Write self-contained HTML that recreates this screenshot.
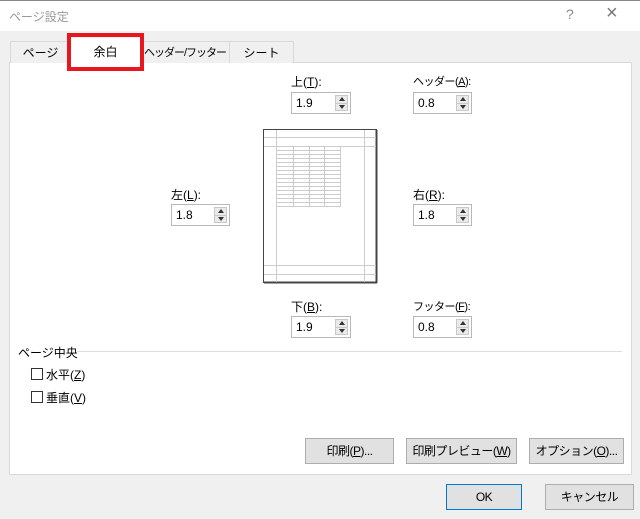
<!DOCTYPE html>
<html><head><meta charset="utf-8"><style>
*{box-sizing:border-box;margin:0;padding:0}
body{width:640px;height:519px;background:#f0f0f0;position:relative;overflow:hidden;font-family:"Liberation Sans","Noto Sans CJK JP",sans-serif;font-size:12px;color:#000}
.a{position:absolute;white-space:nowrap}
.title{left:0;top:0;width:640px;height:31px;background:#fff;border-top:1px solid #888}
.panel{left:9px;top:62px;width:623px;height:413px;background:#fff;border:1px solid #d9d9d9}
.tab{top:41px;height:22px;background:#f0f0f0;border:1px solid #d9d9d9;border-bottom:none;text-align:center;line-height:22px;font-size:12px;overflow:hidden}
.inp{width:60px;height:22px;border:1px solid #b8b8b8;background:#fff;padding-left:4px;line-height:20px;font-size:12px}
.sp{position:absolute;right:2px;top:2px;width:13px;height:16px;border:1px solid #c8c8c8;background:#eaeaea}
.sp:before{content:"";position:absolute;left:3px;top:1px;border:3px solid transparent;border-bottom:4px solid #333;border-top:none}
.sp:after{content:"";position:absolute;left:3px;top:9px;border:3px solid transparent;border-top:4px solid #333;border-bottom:none}
.sp i{position:absolute;left:0;right:0;top:7px;border-top:1px solid #c8c8c8}
.btn{height:26px;background:#e1e1e1;border:1px solid #adadad;text-align:center;line-height:24px;font-size:12px;letter-spacing:-0.5px}
.cb{width:12px;height:12px;border:1px solid #333;background:#fff}
u{text-decoration:underline}
</style></head><body>
<div class="a title"></div>
<div class="a" style="left:9px;top:8px;color:#999;font-size:12px">ページ設定</div>
<div class="a" style="left:566px;top:6px;color:#888;font-size:14px">?</div>
<div class="a" style="left:606px;top:2px;color:#777;font-size:20px;font-weight:100">×</div>
<div class="a panel"></div>
<div class="a tab" style="left:10px;width:61px">ページ</div>
<div class="a tab" style="left:140px;width:90px;font-size:11px;letter-spacing:-1px">ヘッダー/フッター</div>
<div class="a tab" style="left:229px;width:65px">シート</div>
<div class="a" style="left:71px;top:38px;width:69px;height:26px;background:#fff;text-align:center;line-height:28px">余白</div>
<div class="a" style="left:67px;top:33px;width:77px;height:38px;border:4px solid #e8161e"></div>

<div class="a" style="left:291px;top:73px">上(<u>T</u>):</div>
<div class="a inp" style="left:291px;top:92px">1.9<div class="sp"><i></i></div></div>
<div class="a" style="left:413px;top:73px;font-size:11px;letter-spacing:-0.5px">ヘッダー(<u>A</u>):</div>
<div class="a inp" style="left:413px;top:92px;width:59px">0.8<div class="sp"><i></i></div></div>
<div class="a" style="left:171px;top:186px">左(<u>L</u>):</div>
<div class="a inp" style="left:171px;top:204px;width:59px">1.8<div class="sp"><i></i></div></div>
<div class="a" style="left:413px;top:186px">右(<u>R</u>):</div>
<div class="a inp" style="left:413px;top:204px;width:59px">1.8<div class="sp"><i></i></div></div>
<div class="a" style="left:291px;top:298px">下(<u>B</u>):</div>
<div class="a inp" style="left:291px;top:316px">1.9<div class="sp"><i></i></div></div>
<div class="a" style="left:413px;top:298px;font-size:11px;letter-spacing:-0.5px">フッター(<u>F</u>):</div>
<div class="a inp" style="left:413px;top:316px;width:59px">0.8<div class="sp"><i></i></div></div>

<svg class="a" style="left:260px;top:126px" width="120" height="160">
<rect x="3.5" y="3.5" width="113" height="153" fill="#fff" stroke="#444" stroke-width="1"/>
<line x1="116.5" y1="4" x2="116.5" y2="157" stroke="#444" stroke-width="2"/>
<line x1="4" y1="156.5" x2="117" y2="156.5" stroke="#444" stroke-width="2"/>
<g stroke="#ccc" stroke-width="1">
<line x1="16.5" y1="4" x2="16.5" y2="156"/><line x1="104.5" y1="4" x2="104.5" y2="156"/>
<line x1="4" y1="11.5" x2="116" y2="11.5"/><line x1="4" y1="20.5" x2="116" y2="20.5"/>
<line x1="4" y1="139.5" x2="116" y2="139.5"/><line x1="4" y1="148.5" x2="116" y2="148.5"/>
<line x1="33.5" y1="21" x2="33.5" y2="81"/><line x1="49.5" y1="21" x2="49.5" y2="81"/><line x1="64.5" y1="21" x2="64.5" y2="81"/><line x1="80.5" y1="21" x2="80.5" y2="81"/>
</g>
<g stroke="#ccc">
<line x1="17" y1="24.5" x2="80" y2="24.5"/><line x1="17" y1="28.5" x2="80" y2="28.5"/><line x1="17" y1="32.5" x2="80" y2="32.5"/><line x1="17" y1="36.5" x2="80" y2="36.5"/><line x1="17" y1="40.5" x2="80" y2="40.5"/><line x1="17" y1="44.5" x2="80" y2="44.5"/><line x1="17" y1="48.5" x2="80" y2="48.5"/><line x1="17" y1="52.5" x2="80" y2="52.5"/><line x1="17" y1="56.5" x2="80" y2="56.5"/><line x1="17" y1="60.5" x2="80" y2="60.5"/><line x1="17" y1="64.5" x2="80" y2="64.5"/><line x1="17" y1="68.5" x2="80" y2="68.5"/><line x1="17" y1="72.5" x2="80" y2="72.5"/><line x1="17" y1="76.5" x2="80" y2="76.5"/><line x1="17" y1="80.5" x2="80" y2="80.5"/>
</g></svg>

<div class="a" style="left:18px;top:344px">ページ中央</div>
<div class="a" style="left:77px;top:351px;width:545px;border-top:1px solid #ddd"></div>
<div class="a cb" style="left:31px;top:368px"></div><div class="a" style="left:46px;top:366px">水平(<u>Z</u>)</div>
<div class="a cb" style="left:31px;top:391px"></div><div class="a" style="left:46px;top:389px">垂直(<u>V</u>)</div>

<div class="a btn" style="left:305px;top:438px;width:89px">印刷(<u>P</u>)...</div>
<div class="a btn" style="left:406px;top:438px;width:111px">印刷プレビュー(<u>W</u>)</div>
<div class="a btn" style="left:529px;top:438px;width:95px">オプション(<u>O</u>)...</div>
<div class="a btn" style="left:446px;top:484px;width:76px;border-color:#0078d7">OK</div>
<div class="a btn" style="left:545px;top:484px;width:89px">キャンセル</div>
</body></html>
